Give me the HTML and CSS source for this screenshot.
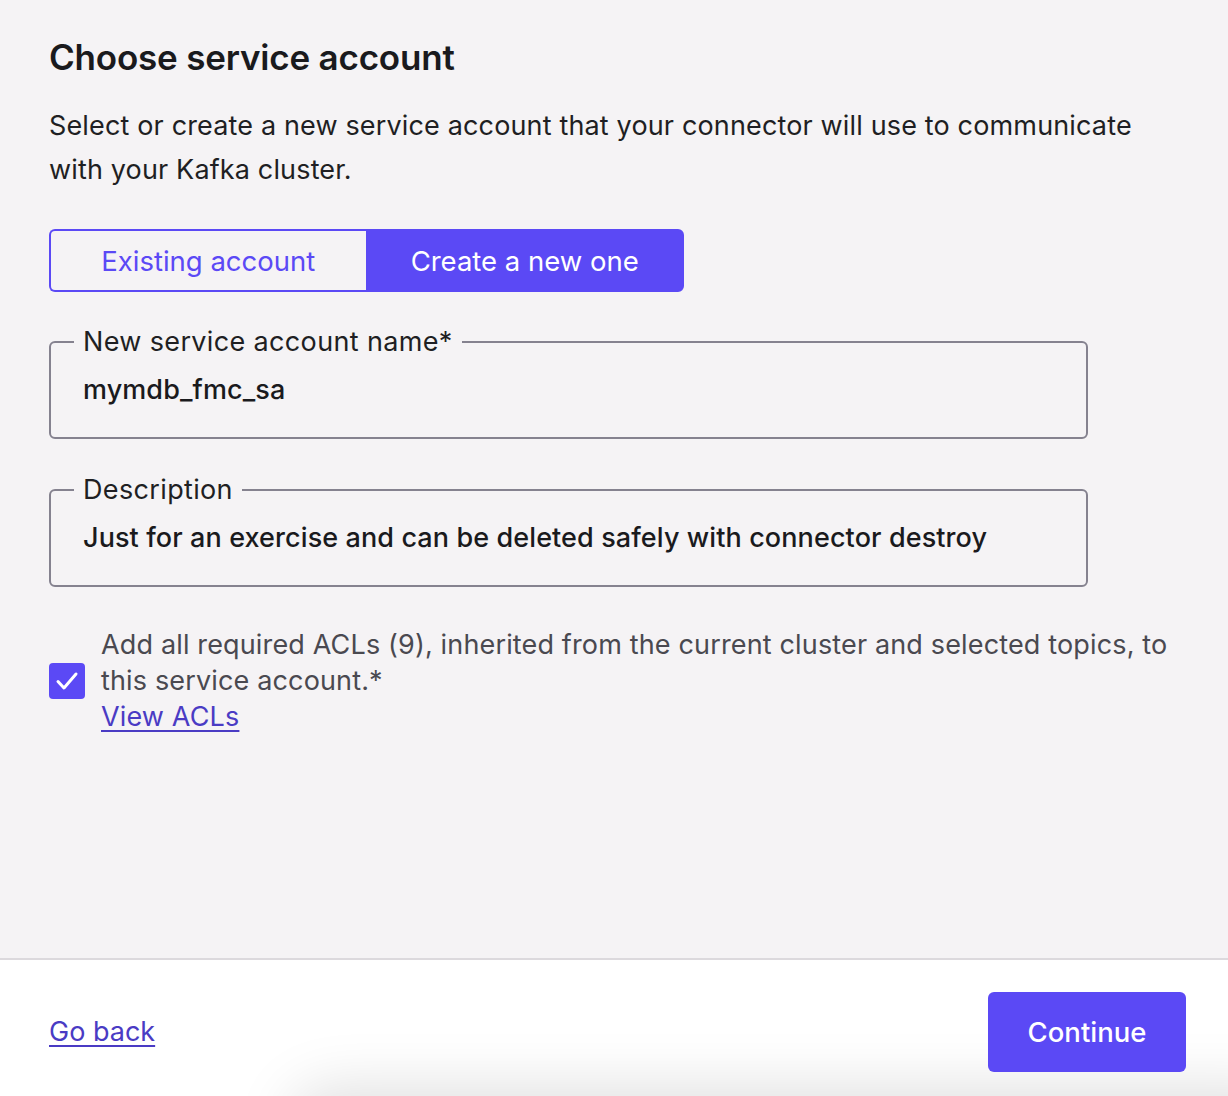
FILE: index.html
```html
<!DOCTYPE html>
<html lang="en">
<head>
<meta charset="utf-8">
<title>Choose service account</title>
<link rel="stylesheet" href="styles.css">
</head>
<body>
<div class="page">
  <main class="content">
    <h1 class="title">Choose service account</h1>
    <p class="intro">Select or create a new service account that your connector will use to communicate with your Kafka cluster.</p>
    <div class="toggle">
      <button class="toggle-btn">Existing account</button>
      <button class="toggle-btn active">Create a new one</button>
    </div>
    <fieldset class="field">
      <legend class="field-label">New service account name*</legend>
      <div class="field-value">mymdb_fmc_sa</div>
    </fieldset>
    <fieldset class="field">
      <legend class="field-label">Description</legend>
      <div class="field-value">Just for an exercise and can be deleted safely with connector destroy</div>
    </fieldset>
    <div class="check-row">
      <span class="checkbox">
        <svg viewBox="0 0 36 36" width="36" height="36"><path d="M9 18.5l6 6.5 12-14" fill="none" stroke="#fff" stroke-width="3" stroke-linecap="round" stroke-linejoin="round"/></svg>
      </span>
      <div class="check-text">
        <span>Add all required ACLs (9), inherited from the current cluster and selected topics, to this service account.*</span>
        <a class="link" href="#">View ACLs</a>
      </div>
    </div>
  </main>
  <footer class="footer">
    <a class="link back" href="#">Go back</a>
    <button class="primary">Continue</button>
  </footer>
</div>
</body>
</html>
```
FILE: styles.css
```css
* { box-sizing: border-box; }
html, body { margin: 0; padding: 0; }
body {
  font-family: Inter, "Noto Sans", "Liberation Sans", sans-serif;
  background: #f5f3f5;
  color: #1a1a1d;
  width: 1228px;
  height: 1096px;
  overflow: hidden;
}
.page {
  display: flex;
  flex-direction: column;
  height: 1096px;
}
.content {
  flex: 1;
  padding: 33px 49px 0 49px;
}
.title {
  margin: 0;
  font-size: 35px;
  line-height: 48px;
  font-weight: 600;
  letter-spacing: -0.2px;
  color: #1a1a1d;
}
.intro {
  margin: 23px 0 0 0;
  font-size: 27px;
  line-height: 44px;
  letter-spacing: 0.15px;
  color: #1f1f23;
  max-width: 1100px;
}
.toggle {
  display: flex;
  margin-top: 37px;
  width: 635px;
  height: 63px;
}
.toggle-btn {
  flex: 1;
  font-family: inherit;
  font-size: 27.5px;
  border: 2px solid #5b49f5;
  background: transparent;
  color: #5b49f5;
  padding: 0;
}
.toggle-btn:first-child {
  border-radius: 6px 0 0 6px;
  border-right: none;
}
.toggle-btn.active {
  background: #5b49f5;
  color: #fff;
  border-radius: 0 6px 6px 0;
}
.field {
  margin: 32px 0 0 0;
  width: 1039px;
  border: 2px solid #85828f;
  border-radius: 6px;
  padding: 0 32px 29px 32px;
  min-inline-size: 0;
}
.field + .field { margin-top: 33px; }
.field-label {
  font-size: 27px;
  line-height: 36px;
  padding: 0 9px;
  margin-left: -9px;
  letter-spacing: 0.35px;
  color: #1f1f23;
}
.field-value {
  margin-top: 12px;
  font-size: 27px;
  line-height: 36px;
  font-weight: 500;
  letter-spacing: 0.1px;
  color: #1a1a1d;
}
.check-row {
  display: flex;
  align-items: flex-start;
  gap: 16px;
  margin-top: 40px;
}
.checkbox {
  flex: none;
  width: 36px;
  height: 36px;
  margin-top: 36px;
  background: #5b49f5;
  border-radius: 4px;
  display: flex;
}
.check-text {
  font-size: 27px;
  line-height: 36px;
  letter-spacing: 0.15px;
  color: #4a4950;
  display: flex;
  flex-direction: column;
  align-items: flex-start;
}
.link {
  color: #4a3bc4;
  text-decoration: underline;
  text-underline-offset: 4px;
  text-decoration-thickness: 2px;
}
.footer {
  position: relative;
  height: 138px;
  border-top: 2px solid #dcd9dd;
  background: #fff;
  display: flex;
  align-items: center;
  justify-content: space-between;
  padding: 0 42px 0 49px;
  overflow: hidden;
}
.footer::after {
  content: "";
  position: absolute;
  left: 300px;
  right: -60px;
  top: 138px;
  height: 60px;
  border-radius: 60px;
  box-shadow: 0 0 60px 10px rgba(0,0,0,0.13);
  pointer-events: none;
}
.back {
  font-size: 27px;
  line-height: 36px;
  margin-top: 8px;
}
.primary {
  position: relative;
  z-index: 1;
  width: 198px;
  height: 80px;
  margin-top: 8px;
  background: #5b49f5;
  color: #fff;
  border: none;
  border-radius: 6px;
  font-family: inherit;
  font-size: 27.5px;
  font-weight: 500;
}
```
